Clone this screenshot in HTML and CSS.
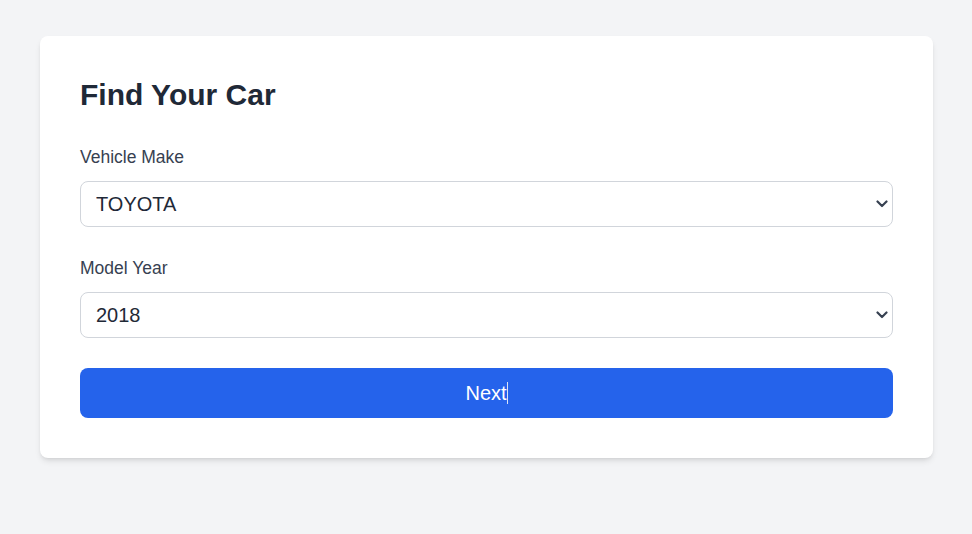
FILE: index.html
```html
<!DOCTYPE html>
<html lang="en">
<head>
<meta charset="utf-8">
<title>Find Your Car</title>
<link rel="stylesheet" href="styles.css">
</head>
<body>
  <main class="card">
    <h1 class="title">Find Your Car</h1>
    <div class="field">
      <label class="label" for="make">Vehicle Make</label>
      <div class="select-wrap">
        <select id="make" class="select">
          <option>TOYOTA</option>
        </select>
        <svg class="chevron" viewBox="0 0 12 8" width="12" height="8" aria-hidden="true"><path d="M1.5 1.5 L6 6 L10.5 1.5" fill="none" stroke="#374151" stroke-width="2.2" stroke-linecap="round" stroke-linejoin="round"/></svg>
      </div>
    </div>
    <div class="field">
      <label class="label" for="year">Model Year</label>
      <div class="select-wrap">
        <select id="year" class="select">
          <option>2018</option>
        </select>
        <svg class="chevron" viewBox="0 0 12 8" width="12" height="8" aria-hidden="true"><path d="M1.5 1.5 L6 6 L10.5 1.5" fill="none" stroke="#374151" stroke-width="2.2" stroke-linecap="round" stroke-linejoin="round"/></svg>
      </div>
    </div>
    <button class="btn" type="button">Next<span class="caret"></span></button>
  </main>
</body>
</html>
```

FILE: styles.css
```css
* { box-sizing: border-box; }

html, body {
  margin: 0;
  background: #f3f4f6;
  font-family: "Liberation Sans", Arial, sans-serif;
}

body {
  padding: 36px 39px 36px 40px;
}

.card {
  background: #ffffff;
  border-radius: 8px;
  padding: 41px 40px 40px;
  box-shadow: 0 4px 6px -1px rgba(0, 0, 0, 0.1), 0 2px 4px -2px rgba(0, 0, 0, 0.1);
}

.title {
  margin: 0 0 34px;
  font-size: 30px;
  line-height: 36px;
  font-weight: 700;
  color: #1f2937;
}

.field {
  margin-bottom: 30.5px;
}

.label {
  display: block;
  font-size: 17.5px;
  line-height: 20px;
  color: #374151;
  margin-bottom: 14px;
}

.select-wrap {
  position: relative;
}

.select {
  display: block;
  width: 100%;
  height: 46px;
  -webkit-appearance: none;
  appearance: none;
  background: #ffffff;
  border: 1px solid #d1d5db;
  border-radius: 8px;
  padding: 0 36px 0 15px;
  font-family: "Liberation Sans", Arial, sans-serif;
  font-size: 20px;
  color: #1f2937;
  outline: none;
}

.chevron {
  position: absolute;
  right: 5px;
  top: 19px;
  pointer-events: none;
}

.btn {
  display: flex;
  align-items: center;
  justify-content: center;
  width: 100%;
  height: 50px;
  border: 0;
  border-radius: 8px;
  background: #2563eb;
  color: #ffffff;
  font-family: "Liberation Sans", Arial, sans-serif;
  font-size: 20px;
  cursor: pointer;
}

.caret {
  display: inline-block;
  width: 1px;
  height: 22px;
  margin-left: 0;
  background: #dbe4f5;
}
```
